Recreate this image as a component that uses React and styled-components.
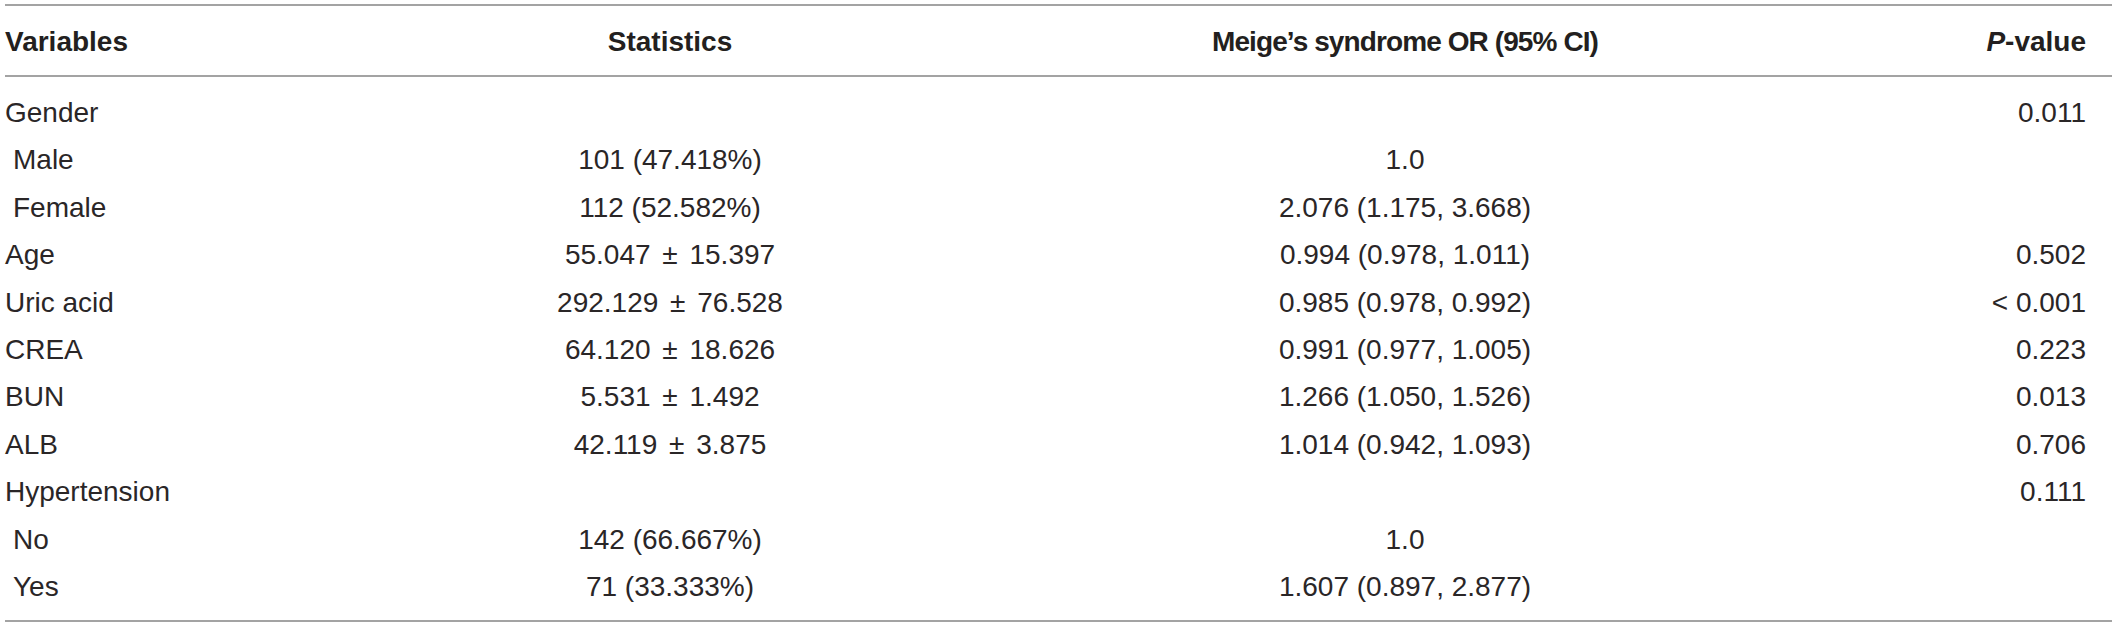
import React from "react";
import styled, { createGlobalStyle } from "styled-components";

const Global = createGlobalStyle`
  html, body { margin: 0; padding: 0; background: #ffffff; }
  body { font-family: "Liberation Sans", Arial, Helvetica, sans-serif; color: #231f20; }
`;

const Table = styled.div`
  width: 2107px;
  margin: 4px 0 0 5px;
  border-top: 2px solid #a3a3a3;
  border-bottom: 2px solid #a3a3a3;
  font-size: 28px;
`;

const Head = styled.div`
  display: grid;
  grid-template-columns: 335px 660px 810px 1fr;
  padding-top: 2px;
  line-height: 67px;
  font-weight: 700;
  border-bottom: 2px solid #a3a3a3;
`;

const Body = styled.div`
  padding: 12px 0 10px;
  color: #2a2627;
`;

const Row = styled.div`
  display: grid;
  grid-template-columns: 335px 660px 810px 1fr;
  line-height: 47.4px;
  height: 47.4px;
`;

const Cell = styled.div`
  white-space: nowrap;
  text-align: ${(p) => p.$align || "left"};
  padding-left: ${(p) => (p.$indent ? "8px" : "0")};
  padding-right: ${(p) => (p.$align === "right" ? "26px" : "0")};
  letter-spacing: ${(p) => (p.$tight ? "-0.9px" : "normal")};
`;

const Pm = styled.span`
  margin: 0 4px;
`;

const Ital = styled.i`
  font-style: italic;
`;

const stat = (a, b) => (
  <>
    {a} <Pm>±</Pm> {b}
  </>
);

const rows = [
  { v: "Gender", p: "0.011" },
  { v: "Male", indent: true, s: "101 (47.418%)", o: "1.0" },
  { v: "Female", indent: true, s: "112 (52.582%)", o: "2.076 (1.175, 3.668)" },
  { v: "Age", s: stat("55.047", "15.397"), o: "0.994 (0.978, 1.011)", p: "0.502" },
  { v: "Uric acid", s: stat("292.129", "76.528"), o: "0.985 (0.978, 0.992)", p: "< 0.001" },
  { v: "CREA", s: stat("64.120", "18.626"), o: "0.991 (0.977, 1.005)", p: "0.223" },
  { v: "BUN", s: stat("5.531", "1.492"), o: "1.266 (1.050, 1.526)", p: "0.013" },
  { v: "ALB", s: stat("42.119", "3.875"), o: "1.014 (0.942, 1.093)", p: "0.706" },
  { v: "Hypertension", p: "0.111" },
  { v: "No", indent: true, s: "142 (66.667%)", o: "1.0" },
  { v: "Yes", indent: true, s: "71 (33.333%)", o: "1.607 (0.897, 2.877)" },
];

export default function App() {
  return (
    <>
      <Global />
      <Table>
        <Head>
          <Cell>Variables</Cell>
          <Cell $align="center">Statistics</Cell>
          <Cell $align="center" $tight>Meige’s syndrome OR (95% CI)</Cell>
          <Cell $align="right">
            <Ital>P</Ital>-value
          </Cell>
        </Head>
        <Body>
          {rows.map((r, i) => (
            <Row key={i}>
              <Cell $indent={r.indent}>{r.v}</Cell>
              <Cell $align="center">{r.s}</Cell>
              <Cell $align="center">{r.o}</Cell>
              <Cell $align="right">{r.p}</Cell>
            </Row>
          ))}
        </Body>
      </Table>
    </>
  );
}
